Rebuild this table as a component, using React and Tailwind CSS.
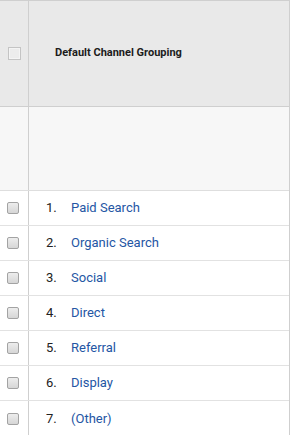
import React from 'react';

const channels = ['Paid Search', 'Organic Search', 'Social', 'Direct', 'Referral', 'Display', '(Other)'];

const RowCheckbox = () => (
    <span className="block w-[12px] h-[12px] rounded-[2px] border border-[#a3a3a3] bg-gradient-to-b from-[#ededed] to-[#d6d6d6]" />
);

const App = () => {
    return (
        <div className="w-[290px] bg-white border-t border-r border-[#cfcfcf] font-['Roboto',sans-serif]">
            {/* header */}
            <div className="flex h-[106px] bg-[#e9e9e9] border-b border-[#cfcfcf]">
                <div className="w-[29px] border-r border-[#cfcfcf] flex items-center pl-[8px]">
                    <span className="block w-[13px] h-[13px] border border-[#c4c4c4] bg-[#ececec] shadow-[inset_0_0_0_1px_#f4f4f4]" />
                </div>
                <div className="flex-1 flex items-center pl-[26px]">
                    <span className="text-[11px] font-bold text-[#1c1c1c]">Default Channel Grouping</span>
                </div>
            </div>

            {/* totals row */}
            <div className="flex h-[84px] bg-[#f7f7f7] border-b border-[#dedede]">
                <div className="w-[29px] border-r border-[#cfcfcf]" />
                <div className="flex-1" />
            </div>

            {channels.map((name, i) => (
                <div key={name} className="flex h-[35px] border-b border-[#e2e2e2] last:border-b-0">
                    <div className="w-[29px] border-r border-[#cfcfcf] flex items-center pl-[7px]">
                        <RowCheckbox />
                    </div>
                    <div className="flex-1 flex items-center text-[13px]">
                        <span className="w-[42px] pl-[17px] text-[#222]">{i + 1}.</span>
                        <span className="text-[#2456a4]">{name}</span>
                    </div>
                </div>
            ))}
        </div>
    );
};

export default App;
